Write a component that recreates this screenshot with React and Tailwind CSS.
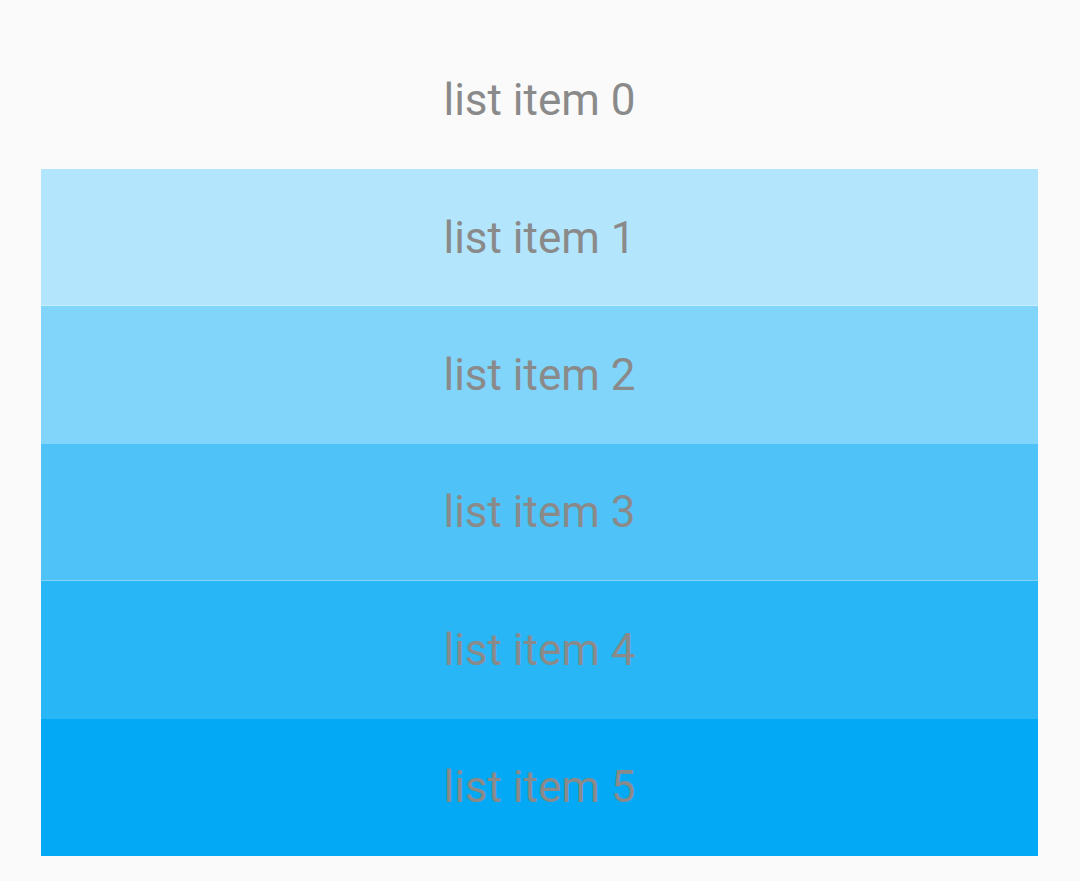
export default function App() {
  const items = [
    { c: "bg-transparent", seam: false },
    { c: "bg-[#b3e5fc]", seam: true },
    { c: "bg-[#81d4fa]", seam: false },
    { c: "bg-[#4fc3f7]", seam: true },
    { c: "bg-[#29b6f6]", seam: false },
    { c: "bg-[#03a9f4]", seam: false },
  ];
  return (
    <div className="w-[1080px] h-[881px] bg-[#fafafa] pt-[31.6px] px-[41px]" style={{ fontFamily: "Roboto, sans-serif" }}>
      <div className="w-[997px] flex flex-col">
        {items.map((it, i) => (
          <div key={i} className={`${it.c} h-[137.4px] flex items-center justify-center relative`}>
            <span className="text-[44px] leading-none text-[#8a8a8a]">list item {i}</span>
            {it.seam && <div className="absolute left-0 right-0 bottom-0 h-px bg-white/30" />}
          </div>
        ))}
      </div>
    </div>
  );
}
